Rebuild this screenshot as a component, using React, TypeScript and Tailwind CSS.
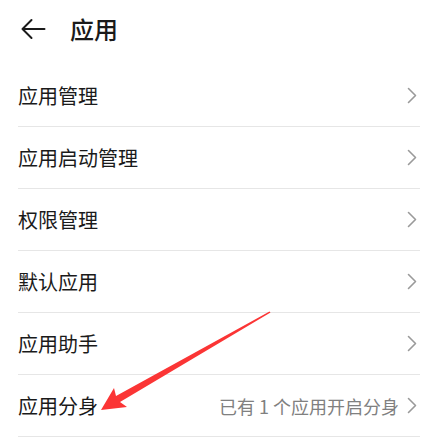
import React from "react";

const rows: { label: string; extra?: string }[] = [
  { label: "应用管理" },
  { label: "应用启动管理" },
  { label: "权限管理" },
  { label: "默认应用" },
  { label: "应用助手" },
  { label: "应用分身", extra: "已有 1 个应用开启分身" },
];

function Chevron() {
  return (
    <svg width="10" height="17" viewBox="0 0 10 17" className="shrink-0">
      <path d="M1.5 1.5 L8.5 8.5 L1.5 15.5" fill="none" stroke="#9a9a9a" strokeWidth="1.6" strokeLinecap="round" strokeLinejoin="round" />
    </svg>
  );
}

export default function App() {
  return (
    <div
      className="relative w-[436px] h-[437px] bg-white overflow-hidden"
      style={{ fontFamily: '"Noto Sans CJK SC", "Noto Sans", sans-serif' }}
    >
      <div className="h-[65px] flex items-center pl-[20px] pb-[7px]">
        <svg width="26" height="22" viewBox="0 0 26 22" className="shrink-0">
          <path d="M24.5 11 H2.5 M11.5 2 L2.5 11 L11.5 20" fill="none" stroke="#1a1a1a" strokeWidth="2" strokeLinecap="round" strokeLinejoin="round" />
        </svg>
        <span className="ml-[24px] text-[24px] leading-none text-[#1a1a1a] font-medium">应用</span>
      </div>
      <div className="px-[18px] pr-[16px]">
        {rows.map((r) => (
          <div key={r.label} className="h-[62px] flex items-center border-b border-[#e6e6e6]">
            <span className="text-[20px] leading-none text-[#1a1a1a] flex-1">{r.label}</span>
            {r.extra && (
              <span className="text-[18px] leading-none text-[#808080] mr-[8px]">{r.extra}</span>
            )}
            <div className="pr-[3px]">
              <Chevron />
            </div>
          </div>
        ))}
      </div>
      <svg className="absolute inset-0 pointer-events-none" width="436" height="437" viewBox="0 0 436 437">
        <polygon
          points="101,410 127,407 120,402 270.5,312.6 269.5,311.4 116,396 114,388"
          fill="#fb3535"
        />
      </svg>
    </div>
  );
}
